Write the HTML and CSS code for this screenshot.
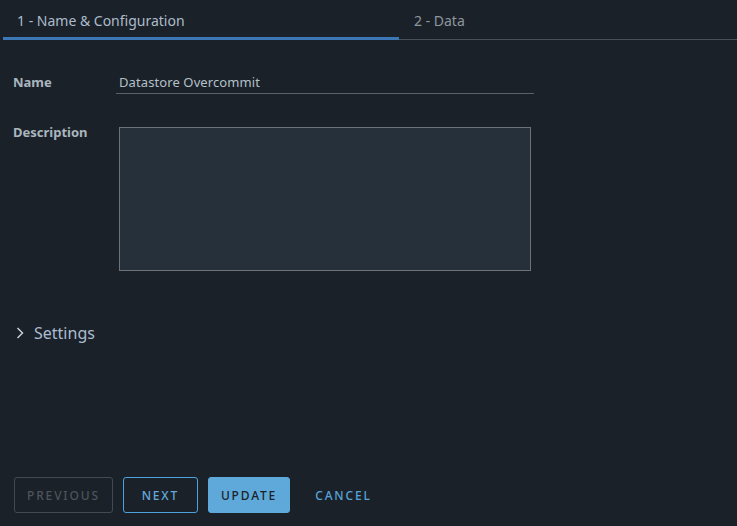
FILE: index.html
```html
<!DOCTYPE html>
<html>
<head>
<meta charset="utf-8">
<link rel="stylesheet" href="styles.css">
</head>
<body>
<div class="page">
  <div class="tabs">
    <div class="tab tab-active">1 - Name &amp; Configuration</div>
    <div class="tab tab-rest">2 - Data</div>
  </div>
  <div class="form">
    <div class="row row-name">
      <div class="label">Name</div>
      <div class="input">Datastore Overcommit</div>
    </div>
    <div class="row row-desc">
      <div class="label label-desc">Description</div>
      <div class="textarea"></div>
    </div>
    <div class="settings">
      <svg class="chev" width="8" height="12" viewBox="0 0 8 12"><path d="M1.5 1 L6.5 6 L1.5 11" fill="none" stroke="#c8cdd2" stroke-width="1.5"/></svg>
      <span class="settings-text">Settings</span>
    </div>
  </div>
  <div class="footer">
    <button class="btn btn-disabled">PREVIOUS</button>
    <button class="btn btn-outline">NEXT</button>
    <button class="btn btn-primary">UPDATE</button>
    <button class="btn btn-link">CANCEL</button>
  </div>
</div>
</body>
</html>
```
FILE: styles.css
```css
html, body {
  margin: 0;
  padding: 0;
  background: #1b2128;
}
body {
  font-family: "Noto Sans", "Liberation Sans", sans-serif;
}
.page {
  height: 526px;
  display: flex;
  flex-direction: column;
}
.tabs {
  display: flex;
  height: 40px;
  padding-left: 3px;
}
.tab {
  display: flex;
  align-items: center;
  font-size: 14px;
  box-sizing: border-box;
  padding-top: 4px;
}
.tab-active {
  width: 396px;
  padding-left: 14px;
  color: #acbccd;
  border-bottom: 3px solid #3c78b6;
}
.tab-rest {
  flex: 1;
  padding-left: 15px;
  padding-bottom: 2px;
  color: #8d979f;
  border-bottom: 1px solid #495058;
}
.form {
  padding-left: 13px;
}
.row {
  display: grid;
  grid-template-columns: 103px 418px;
  align-items: start;
}
.row-name {
  margin-top: 30px;
}
.label {
  font-size: 13px;
  font-weight: 700;
  color: #a9b6bf;
  line-height: 24px;
}
.input {
  height: 24px;
  line-height: 24px;
  box-sizing: border-box;
  padding-left: 3px;
  font-size: 13px;
  letter-spacing: 0.1px;
  color: #b3c0c9;
  border-bottom: 1px solid #5b6168;
}
.row-desc {
  margin-top: 33px;
}
.label-desc {
  margin-top: -7px;
}
.textarea {
  margin-left: 3px;
  width: 412px;
  height: 144px;
  box-sizing: border-box;
  background: #25303a;
  border: 1px solid #6e7276;
}
.settings {
  margin-top: 50px;
  height: 24px;
  display: flex;
  align-items: center;
  padding-left: 3px;
}
.chev {
  margin-right: 10px;
}
.settings-text {
  font-size: 16px;
  color: #a9bdd2;
}
.footer {
  margin-top: auto;
  padding: 0 0 13px 14px;
  display: flex;
  gap: 10px;
}
.btn {
  height: 36px;
  min-width: 75px;
  padding: 0 12px;
  box-sizing: border-box;
  font-family: "Noto Sans", "Liberation Sans", sans-serif;
  font-size: 12px;
  font-weight: 500;
  letter-spacing: 1.85px;
  border-radius: 3px;
  background: transparent;
  border: 1px solid transparent;
}
.btn-disabled {
  color: #4d545b;
  border-color: #434950;
}
.btn-outline {
  color: #63a9dc;
  border-color: #4aa3df;
}
.btn-primary {
  background: #5ea9da;
  border-color: #5ea9da;
  color: #1b2128;
}
.btn-link {
  color: #57a3d9;
  margin-left: 2px;
}
```
